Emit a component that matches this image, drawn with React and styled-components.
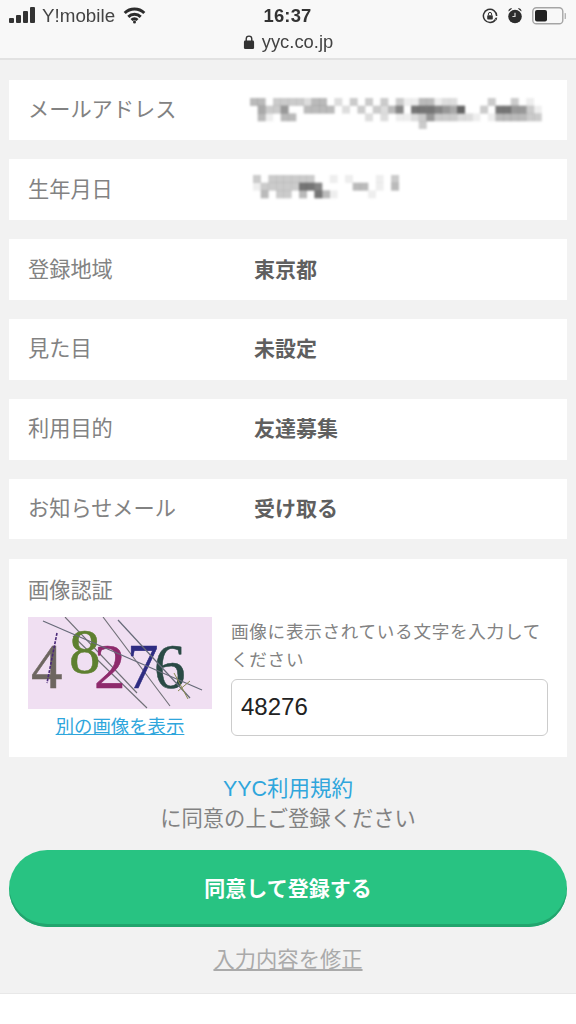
import React from "react";
import styled, { createGlobalStyle } from "styled-components";

const FONT = `"Noto Sans CJK JP", "Noto Sans", sans-serif`;

const GlobalStyle = createGlobalStyle`
  html, body { margin: 0; padding: 0; background: #fff; }
  body { font-family: ${FONT}; }
`;

const rows = [
  { label: "メールアドレス", blur: "mail" },
  { label: "生年月日", blur: "birth" },
  { label: "登録地域", value: "東京都" },
  { label: "見た目", value: "未設定" },
  { label: "利用目的", value: "友達募集" },
  { label: "お知らせメール", value: "受け取る" },
];

// censored cells: [col, level] per line
const mosaics = {
  mail: {
    cell: 7.67,
    width: 296,
    height: 36,
    left: -4,
    top: 18,
    lines: [
      [[0,4],[1,4],[3,3],[4,3],[5,3],[6,3],[7,2],[8,4],[9,4],[11,2],[13,3],[15,3],[17,3],[19,3],[20,1],[21,1],[22,4],[23,4],[24,1],[25,2],[26,2],[31,3],[34,3],[36,1]],
      [[1,5],[2,3],[3,3],[4,6],[7,4],[8,4],[9,4],[10,4],[12,2],[14,3],[16,3],[17,2],[18,4],[19,7],[21,8],[22,8],[23,8],[24,7],[25,6],[26,5],[27,9],[30,3],[32,8],[33,8],[34,6],[35,6],[36,3],[37,1]],
      [[1,4],[2,1],[4,4],[5,4],[15,2],[17,2],[19,1],[20,1],[21,2],[22,3],[23,6],[24,3],[25,3],[26,3],[27,2],[28,2],[29,1],[31,1],[32,4],[33,4],[34,4],[35,4],[36,3],[37,3]],
      [[22,3]],
    ],
  },
  birth: {
    cell: 7.67,
    width: 150,
    height: 26,
    left: -1,
    top: 16,
    lines: [
      [[0,3],[2,3],[3,3],[4,3],[5,3],[6,3],[7,3],[10,1],[12,1],[16,1],[18,3]],
      [[0,1],[1,3],[2,3],[3,3],[4,3],[5,3],[6,8],[7,8],[8,7],[13,4],[14,4],[16,1],[18,4]],
      [[1,4],[3,3],[4,3],[6,4],[8,8],[9,4],[10,1],[15,1]],
    ],
  },
};

function Mosaic({ name }) {
  const { cell, width, height, left, top, lines } = mosaics[name];
  return (
    <MosaicSvg $left={left} $top={top} width={width} height={height} viewBox={`0 0 ${width} ${height}`}>
      {lines.map((line, y) =>
        line.map(([x, level]) => (
          <rect
            key={`${x}-${y}`}
            x={x * cell}
            y={y * cell}
            width={cell + 0.3}
            height={cell + 0.3}
            fill="#4a4a4a"
            opacity={level * 0.095}
          />
        ))
      )}
    </MosaicSvg>
  );
}

function StatusLeft() {
  return (
    <StatusGroup>
      <svg width="27" height="17" viewBox="0 0 27 17">
        <rect x="0" y="11" width="5" height="5" rx="1" fill="#333" />
        <rect x="7" y="8" width="5" height="8" rx="1" fill="#333" />
        <rect x="14" y="4" width="5" height="12" rx="1" fill="#333" />
        <rect x="21" y="0" width="5" height="16" rx="1" fill="#333" />
      </svg>
      <Carrier>Y!mobile</Carrier>
      <svg width="23" height="17" viewBox="0 0 22 17" fill="none" stroke="#2c2c2c" strokeWidth="3">
        <path d="M1.2 6 A14 14 0 0 1 20.8 6" />
        <path d="M4.8 9.8 A9 9 0 0 1 17.2 9.8" />
        <path d="M8 13 A4.4 4.4 0 0 1 14 13" />
        <circle cx="11" cy="15" r="1.5" fill="#2c2c2c" stroke="none" />
      </svg>
    </StatusGroup>
  );
}

function StatusRight() {
  return (
    <StatusGroup $gap="9px">
      <svg width="16" height="16" viewBox="0 0 16 16" fill="none">
        <path d="M13.5 11.5 A6.6 6.6 0 1 1 14.6 8" stroke="#333" strokeWidth="1.5" />
        <path d="M12.6 10 l2.6 -0.4 l-0.6 2.8 z" fill="#333" />
        <rect x="5.2" y="7.2" width="5.6" height="4.4" rx="0.8" fill="#333" />
        <path d="M6.4 7.2 V6 a1.6 1.6 0 0 1 3.2 0 V7.2" stroke="#333" strokeWidth="1" />
      </svg>
      <svg width="16" height="17" viewBox="0 0 16 17">
        <circle cx="8" cy="9.5" r="6.8" fill="#2c2c2c" />
        <path d="M1.6 4.6 a2.6 2.6 0 0 1 3.6 -3 z M14.4 4.6 a2.6 2.6 0 0 0 -3.6 -3 z" fill="#2c2c2c" />
        <path d="M8 5.8 V9.5 H5.4" fill="none" stroke="#d8d8d8" strokeWidth="1.2" />
      </svg>
      <svg width="34" height="18" viewBox="0 0 34 18">
        <rect x="0.8" y="0.8" width="30" height="16" rx="3.6" fill="none" stroke="#a5a5a5" strokeWidth="1.4" />
        <rect x="3" y="3" width="12" height="11.6" rx="2" fill="#222" />
        <path d="M32.6 6 a3 3 0 0 1 0 6 z" fill="#b4b4b4" />
      </svg>
    </StatusGroup>
  );
}

function Captcha() {
  return (
    <CaptchaSvg viewBox="0 0 184 92" width="184" height="92">
      <rect width="184" height="92" fill="#f0dff2" />
      <g stroke="#6f6f76" strokeWidth="1.1" fill="none">
        <path d="M75 0 L142 89" />
        <path d="M37 0 L109 76" />
        <path d="M45 19 L119 91" />
      </g>
      <g fontFamily='"Liberation Serif", serif' fontSize="63" strokeWidth="0.5">
        <text x="3" y="71" fill="#6d6660" stroke="#6d6660">4</text>
        <text x="41" y="56" fill="#5e8030" stroke="#5e8030">8</text>
        <text x="66" y="71" fill="#8e2a6c" stroke="#8e2a6c">2</text>
        <text x="99" y="71" fill="#2e2c82" stroke="#2e2c82">7</text>
        <text x="126" y="71" fill="#2a4a45" stroke="#2a4a45">6</text>
      </g>
      <g stroke="#666a78" strokeWidth="1.2" fill="none">
        <path d="M15 4 L174 73" />
        <path d="M90 3 L162 81" />
      </g>
      <path d="M29 16 L19 66" stroke="#4a2a78" strokeWidth="1.6" strokeDasharray="3 1.2" />
      <path d="M146 56 L160 82 M150 74 L162 64" stroke="#8a8a50" strokeWidth="1" />
    </CaptchaSvg>
  );
}

export default function App() {
  return (
    <Page>
      <GlobalStyle />
      <TopBar>
        <StatusLine>
          <StatusLeft />
          <Clock>16:37</Clock>
          <StatusRight />
        </StatusLine>
        <UrlLine>
          <svg width="12" height="16" viewBox="0 0 13 16">
            <rect x="1" y="6.5" width="11" height="9" rx="1.4" fill="#333" />
            <path d="M3.5 7 V4.6 a3 3 0 0 1 6 0 V7" fill="none" stroke="#333" strokeWidth="1.5" />
          </svg>
          <span>yyc.co.jp</span>
        </UrlLine>
      </TopBar>

      <Content>
        {rows.map((row) => (
          <Row key={row.label}>
            <Label>{row.label}</Label>
            {row.blur ? <Mosaic name={row.blur} /> : <Value>{row.value}</Value>}
          </Row>
        ))}

        <CaptchaCard>
          <Label>画像認証</Label>
          <CaptchaBody>
            <CaptchaLeft>
              <Captcha />
              <ReloadLink href="#">別の画像を表示</ReloadLink>
            </CaptchaLeft>
            <CaptchaRight>
              <Hint>画像に表示されている文字を入力してください</Hint>
              <CodeInput defaultValue="48276" />
            </CaptchaRight>
          </CaptchaBody>
        </CaptchaCard>

        <Terms>
          <TermsLink href="#">YYC利用規約</TermsLink>
          <TermsText>に同意の上ご登録ください</TermsText>
        </Terms>

        <SubmitButton>同意して登録する</SubmitButton>
        <EditLink href="#">入力内容を修正</EditLink>
      </Content>
      <Bottom />
    </Page>
  );
}

const Page = styled.div`
  width: 576px;
  height: 1024px;
  overflow: hidden;
  background: #f2f2f2;
  display: flex;
  flex-direction: column;
`;

const TopBar = styled.header`
  height: 58px;
  flex: none;
  background: #f8f8f8;
  border-bottom: 2px solid #e2e2e2;
  color: #333;
  font-family: "Liberation Sans", Arial, sans-serif;
  filter: blur(0.4px);
`;

const StatusLine = styled.div`
  height: 31px;
  padding: 0 10px 0 9px;
  display: grid;
  grid-template-columns: 1fr auto 1fr;
  align-items: center;
`;

const StatusGroup = styled.div`
  display: flex;
  align-items: center;
  gap: ${(p) => p.$gap || "6px"};
  &:last-child {
    justify-content: flex-end;
  }
`;

const Carrier = styled.span`
  font-size: 18.8px;
  color: #444;
  margin-right: 2px;
`;

const Clock = styled.span`
  font-size: 18.4px;
  font-weight: 700;
  letter-spacing: 0.2px;
  color: #333;
`;

const UrlLine = styled.div`
  height: 22px;
  display: flex;
  align-items: center;
  justify-content: center;
  gap: 7px;
  font-size: 18.4px;
  color: #444;
`;

const Content = styled.main`
  flex: 1;
  padding: 19.5px 9px 0;
  display: flex;
  flex-direction: column;
  gap: 19.4px;
`;

const Row = styled.div`
  height: 60.5px;
  box-sizing: border-box;
  padding: 0 0 4px 19px;
  background: #fff;
  display: grid;
  grid-template-columns: 226px 1fr;
  align-items: center;
`;

const Label = styled.div`
  font-size: 21.2px;
  line-height: 30px;
  color: #828282;
`;

const Value = styled.div`
  font-size: 21px;
  font-weight: 700;
  line-height: 30px;
  color: #5f5f5f;
`;

const MosaicSvg = styled.svg`
  display: block;
  align-self: start;
  filter: blur(1.1px);
  margin-left: ${(p) => p.$left}px;
  margin-top: ${(p) => p.$top}px;
`;

const CaptchaCard = styled.section`
  height: 198px;
  box-sizing: border-box;
  padding: 15px 19px 0;
  background: #fff;
`;

const CaptchaBody = styled.div`
  display: flex;
  gap: 19px;
  margin-top: 13px;
`;

const CaptchaLeft = styled.div`
  width: 184px;
  flex: none;
  display: flex;
  flex-direction: column;
  align-items: center;
`;

const CaptchaSvg = styled.svg`
  display: block;
  filter: blur(0.5px);
`;

const ReloadLink = styled.a`
  margin-top: 3px;
  font-size: 18.4px;
  line-height: 26px;
  color: #2fa6dc;
  text-decoration: underline;
`;

const CaptchaRight = styled.div`
  flex: 1;
  min-width: 0;
`;

const Hint = styled.p`
  margin: 0;
  font-size: 17.6px;
  line-height: 28px;
  color: #828282;
  letter-spacing: 0.7px;
`;

const CodeInput = styled.input`
  display: block;
  width: 100%;
  height: 57px;
  margin-top: 6px;
  box-sizing: border-box;
  padding: 0 9px;
  border: 1.5px solid #ccc;
  border-radius: 6px;
  background: #fff;
  font-family: "Liberation Sans", Arial, sans-serif;
  font-size: 24px;
  color: #222;
  outline: none;
`;

const Terms = styled.div`
  margin-top: -1px;
  display: flex;
  flex-direction: column;
  align-items: center;
`;

const TermsLink = styled.a`
  font-family: "Liberation Sans", ${FONT};
  font-size: 21.5px;
  line-height: 28px;
  color: #2fa6dc;
  text-decoration: none;
`;

const TermsText = styled.div`
  font-size: 21.3px;
  line-height: 28px;
  color: #828282;
`;

const SubmitButton = styled.button`
  height: 76.6px;
  flex: none;
  margin-top: -0.4px;
  border: none;
  border-radius: 38.3px;
  background: #28c382;
  box-shadow: inset 0 -3px 0 #22a56e;
  color: #fff;
  font-family: ${FONT};
  font-size: 21px;
  font-weight: 700;
  padding: 0 0 4px;
`;

const EditLink = styled.a`
  margin-top: -1px;
  align-self: center;
  font-size: 21.3px;
  line-height: 26px;
  color: #aaa;
  text-decoration: underline;
`;

const Bottom = styled.div`
  height: 30.7px;
  flex: none;
  box-sizing: border-box;
  background: #fff;
  border-top: 1px solid #e8e8e8;
`;
